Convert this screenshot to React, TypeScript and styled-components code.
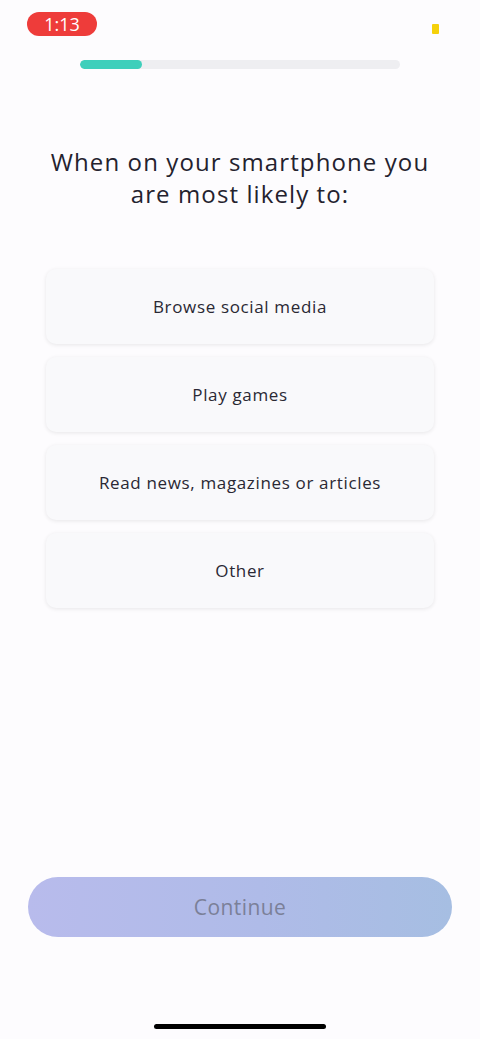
import React from "react";
import styled, { createGlobalStyle } from "styled-components";

const Global = createGlobalStyle`
  html, body { margin: 0; padding: 0; background: #fdfcfe; }
  body { font-family: Lato, "Open Sans", sans-serif; }
`;

const Screen = styled.div`
  width: 480px;
  height: 1039px;
  background: #fdfcfe;
  display: flex;
  flex-direction: column;
  box-sizing: border-box;
`;

const StatusBar = styled.div`
  height: 48px;
  display: flex;
  align-items: flex-start;
  justify-content: space-between;
  padding: 12px 41px 0 27px;
  box-sizing: border-box;
`;

const TimePill = styled.div`
  width: 70px;
  height: 24px;
  border-radius: 12px;
  background: #ee3c3a;
  color: #fff;
  font-family: "Open Sans", sans-serif;
  font-size: 18px;
  line-height: 24px;
  text-align: center;
`;

const Dot = styled.div`
  width: 7px;
  height: 10px;
  margin-top: 12px;
  border-radius: 1px;
  background: #f5d10a;
`;

const Track = styled.div`
  margin: 12px auto 0;
  width: 320px;
  height: 9px;
  border-radius: 5px;
  background: #eeeef1;
  overflow: hidden;
`;

const Fill = styled.div`
  height: 100%;
  border-radius: 5px;
  background: #3ecfbb;
`;

const Title = styled.h1`
  margin: 77px 0 0;
  text-align: center;
  font-family: "Open Sans", sans-serif;
  font-weight: 500;
  font-size: 24px;
  line-height: 32px;
  letter-spacing: 1.1px;
  color: #24222e;
`;

const Options = styled.div`
  margin: 59px 46px 0;
  display: flex;
  flex-direction: column;
  gap: 13px;
`;

const Option = styled.div`
  height: 75px;
  border-radius: 10px;
  background: #f9f9fb;
  box-shadow: 0 1px 4px rgba(0, 0, 0, 0.09);
  display: flex;
  align-items: center;
  justify-content: center;
  font-family: "Open Sans", sans-serif;
  font-size: 17px;
  letter-spacing: 0.65px;
  color: #2a2833;
`;

const Spacer = styled.div`
  flex: 1;
`;

const ContinueButton = styled.div`
  margin: 0 28px;
  height: 60px;
  border-radius: 30px;
  background: linear-gradient(90deg, #b8bbec 0%, #afbbe8 55%, #a6bee2 100%);
  display: flex;
  align-items: center;
  justify-content: center;
  font-family: "Open Sans", sans-serif;
  font-size: 21px;
  letter-spacing: 0.4px;
  color: #7b8098;
`;

const HomeIndicator = styled.div`
  margin: 87px auto 10px;
  width: 172px;
  height: 5px;
  border-radius: 3px;
  background: #000;
`;

const options = [
  "Browse social media",
  "Play games",
  "Read news, magazines or articles",
  "Other",
];

export default function App() {
  const progress = 62 / 320;
  return (
    <>
      <Global />
      <Screen>
        <StatusBar>
          <TimePill>1:13</TimePill>
          <Dot />
        </StatusBar>
        <Track>
          <Fill style={{ width: `${progress * 100}%` }} />
        </Track>
        <Title>
          When on your smartphone you
          <br />
          are most likely to:
        </Title>
        <Options>
          {options.map((o) => (
            <Option key={o}>{o}</Option>
          ))}
        </Options>
        <Spacer />
        <ContinueButton>Continue</ContinueButton>
        <HomeIndicator />
      </Screen>
    </>
  );
}
